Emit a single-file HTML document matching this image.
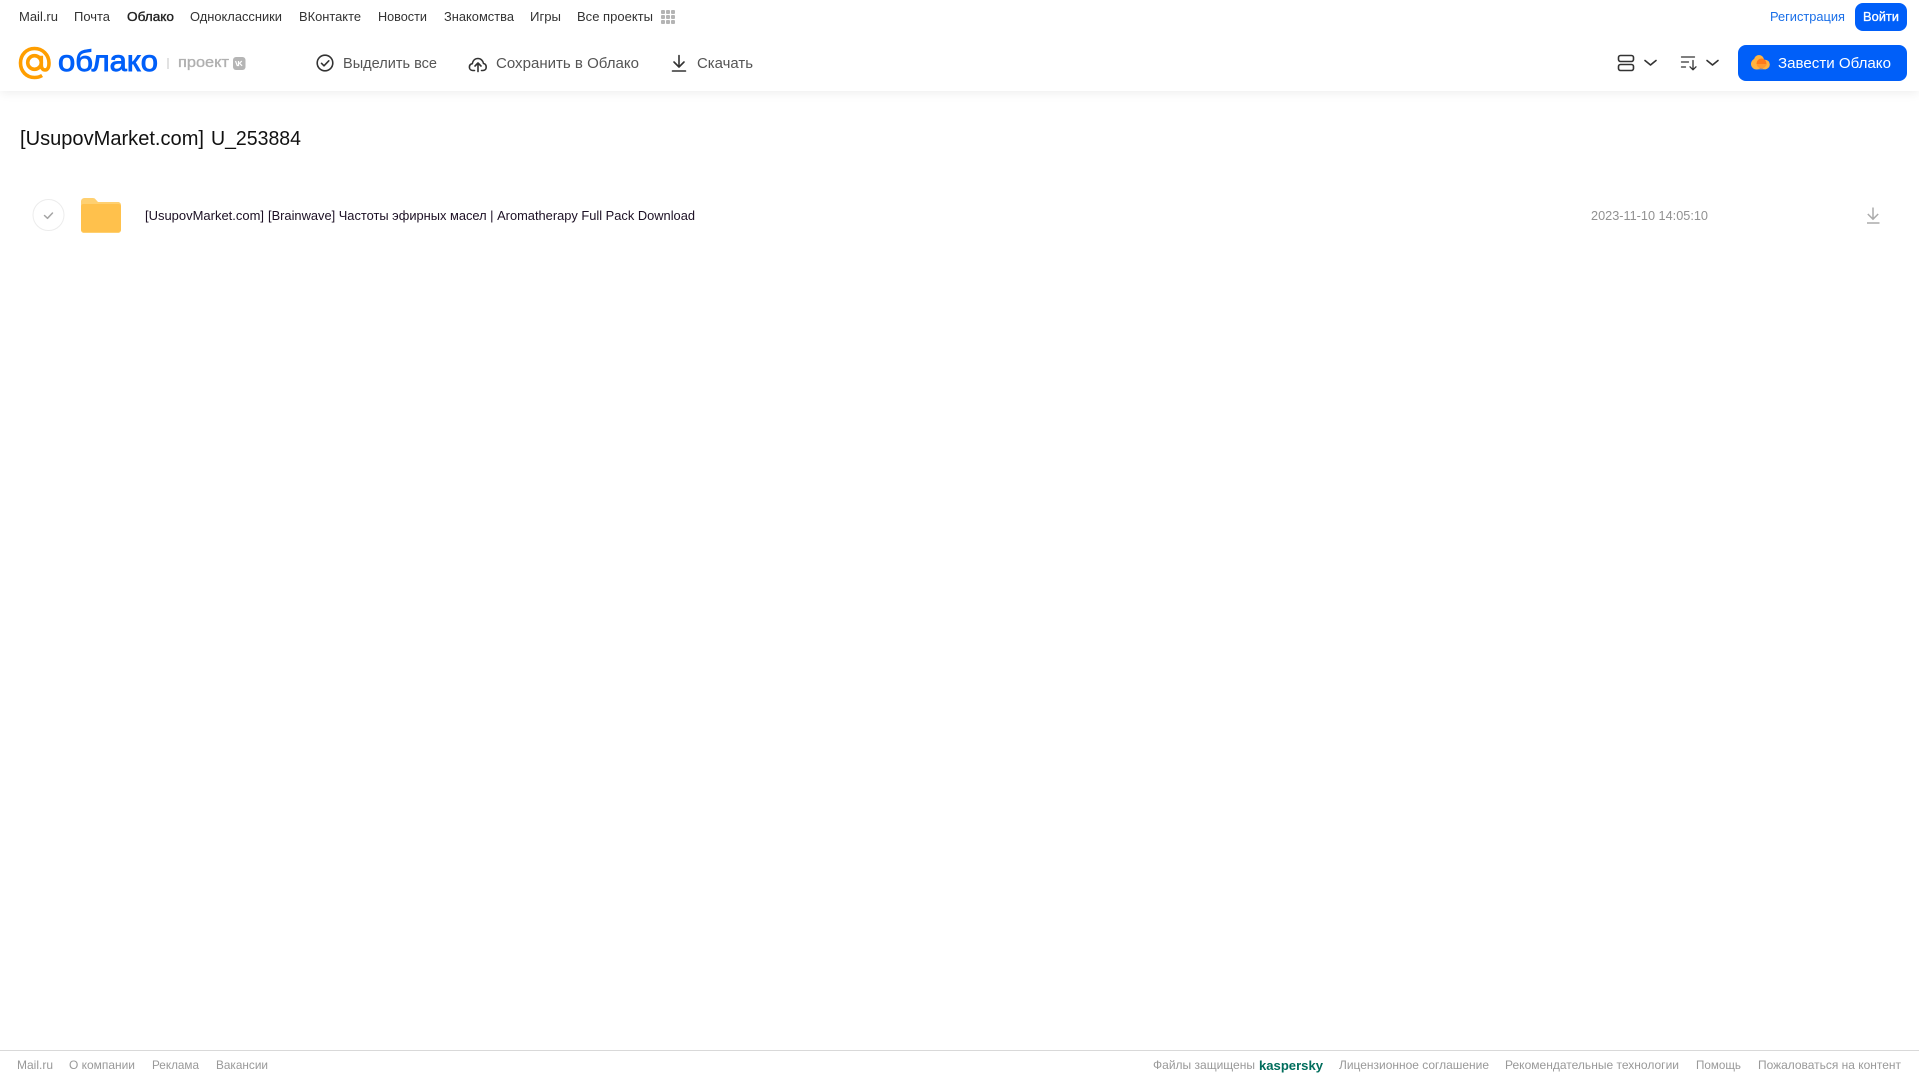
<!DOCTYPE html>
<html lang="ru">
<head>
<meta charset="utf-8">
<title>Облако</title>
<style>
html,body{margin:0;padding:0;background:#fff;width:1919px;height:1079px;overflow:hidden}
.hd{position:absolute;left:0;top:0;width:1919px;height:91px;background:#fff;box-shadow:0 2px 10px rgba(0,0,0,.07)}
svg{position:absolute;left:0;top:0}
text{font-family:"Liberation Sans",Arial,sans-serif}
</style>
</head>
<body>
<div class="hd"></div>
<svg width="1919" height="1079" viewBox="0 0 1919 1079" xmlns="http://www.w3.org/2000/svg">
<!-- top nav -->
<g font-size="12.5" fill="#333">
<text x="19" y="21" textLength="39" lengthAdjust="spacingAndGlyphs">Mail.ru</text>
<text x="74" y="21" textLength="36" lengthAdjust="spacingAndGlyphs">Почта</text>
<text x="127" y="21" fill="#222" stroke="#222" stroke-width=".35" textLength="47" lengthAdjust="spacingAndGlyphs">Облако</text>
<text x="190" y="21" textLength="92" lengthAdjust="spacingAndGlyphs">Одноклассники</text>
<text x="299" y="21" textLength="62" lengthAdjust="spacingAndGlyphs">ВКонтакте</text>
<text x="378" y="21" textLength="49" lengthAdjust="spacingAndGlyphs">Новости</text>
<text x="444" y="21" textLength="70" lengthAdjust="spacingAndGlyphs">Знакомства</text>
<text x="530" y="21" textLength="31" lengthAdjust="spacingAndGlyphs">Игры</text>
<text x="577" y="21" textLength="76" lengthAdjust="spacingAndGlyphs">Все проекты</text>
</g>
<g fill="#b4b4b4">
<rect x="661" y="10" width="4" height="4" rx="1"/><rect x="666" y="10" width="4" height="4" rx="1"/><rect x="671" y="10" width="4" height="4" rx="1"/>
<rect x="661" y="15" width="4" height="4" rx="1"/><rect x="666" y="15" width="4" height="4" rx="1"/><rect x="671" y="15" width="4" height="4" rx="1"/>
<rect x="661" y="20" width="4" height="4" rx="1"/><rect x="666" y="20" width="4" height="4" rx="1"/><rect x="671" y="20" width="4" height="4" rx="1"/>
</g>
<text x="1770" y="21" font-size="12.5" fill="#1a6fe8" textLength="75" lengthAdjust="spacingAndGlyphs">Регистрация</text>
<rect x="1855" y="3" width="52" height="28" rx="8" fill="#005ff9"/>
<text x="1863" y="21" font-size="12.5" fill="#fff" stroke="#fff" stroke-width=".3" textLength="36" lengthAdjust="spacingAndGlyphs">Войти</text>

<!-- logo -->
<g fill="none" stroke="#ff9e00" stroke-width="3.6">
<circle cx="34.500" cy="62.500" r="6.800"/>
<path d="M41.300 55.700v9.300c0 3.300 1.700 5 3.800 5 2.500 0 3.900-2.600 3.900-7C49 54.800 42.500 48.500 34.500 48.500S20.500 54.800 20.500 63 26.500 77.500 34.500 77.500c3 0 5.400-.7 7.600-2"/>
</g>
<text x="58" y="71" font-size="29.500" fill="#005ff9" stroke="#005ff9" stroke-width=".9" textLength="100" lengthAdjust="spacingAndGlyphs">облако</text>
<rect x="167.500" y="58" width="1" height="11" fill="#c4c4c4"/>
<text x="178" y="67" font-size="15" fill="#b0b0b0" stroke="#b0b0b0" stroke-width=".35" textLength="51" lengthAdjust="spacingAndGlyphs">проект</text>
<rect x="233" y="57" width="12.500" height="13" rx="3" fill="#b5b5b5"/>
<path d="M235.500 61l1.700 4.500h1.300v-4.500M241.800 61l-2.300 2.300 2.600 2.500" fill="none" stroke="#fff" stroke-width="1.200"/>

<!-- toolbar -->
<g fill="none" stroke="#333" stroke-width="1.600" stroke-linecap="round" stroke-linejoin="round">
<circle cx="325" cy="63" r="7.800"/>
<path d="M321.500 63.300l2.500 2.500 4.800-5"/>
<path d="M474.500 70.500h-1.800c-2 0-3.300-1.500-3.300-3.400 0-1.800 1.200-3.100 2.900-3.400.6-3.200 2.800-5.200 5.600-5.200 2.900 0 5.100 2.100 5.600 5 1.700.3 2.700 1.800 2.700 3.600 0 2-1.400 3.400-3.400 3.400h-1.300"/>
<path d="M478 71.500v-8.500M475 66l3-3 3 3"/>
<path d="M679 55.500v11M674 62l5 5 5-5"/>
<path d="M672.500 71h13"/>
</g>
<g font-size="14.500" fill="#555">
<text x="343" y="68" textLength="94" lengthAdjust="spacingAndGlyphs">Выделить все</text>
<text x="496" y="68" textLength="143" lengthAdjust="spacingAndGlyphs">Сохранить в Облако</text>
<text x="697" y="68" textLength="56" lengthAdjust="spacingAndGlyphs">Скачать</text>
</g>

<!-- view / sort -->
<g fill="none" stroke="#333" stroke-width="1.600" stroke-linecap="round" stroke-linejoin="round">
<rect x="1618.500" y="55.500" width="15" height="6" rx="2"/>
<rect x="1618.500" y="64.500" width="15" height="6" rx="2"/>
<path d="M1645 60.500l5.500 4.500 5.500-4.500"/>
</g>
<g fill="none" stroke="#333" stroke-width="1.300" stroke-linecap="round" stroke-linejoin="round">
<path d="M1681.500 57h13M1681.500 62h7M1681.500 67h4"/>
<path d="M1693 60.500v9M1690 66.800l3 3 3-3"/>
</g>
<path d="M1707 60.500l5.500 4.500 5.500-4.500" fill="none" stroke="#333" stroke-width="1.600" stroke-linecap="round" stroke-linejoin="round"/>
<rect x="1738" y="45" width="169" height="36" rx="8" fill="#005ff9"/>
<g>
<circle cx="1756.500" cy="64" r="5.500" fill="#ffb340"/>
<circle cx="1759" cy="60" r="5" fill="#ffb340"/>
<circle cx="1765" cy="64.500" r="4.800" fill="#ffb340"/>
<circle cx="1761.500" cy="63.500" r="5" fill="#ff7a1a"/>
<rect x="1756" y="64" width="10" height="5.500" fill="#ffb340" opacity=".55"/>
</g>
<text x="1778" y="68" font-size="14.500" fill="#fff" textLength="113" lengthAdjust="spacingAndGlyphs">Завести Облако</text>

<!-- title -->
<text x="20" y="145" font-size="20.500" fill="#111" textLength="184" lengthAdjust="spacingAndGlyphs">[UsupovMarket.com]</text>
<text x="211" y="145" font-size="20.500" fill="#111" textLength="90" lengthAdjust="spacingAndGlyphs">U_253884</text>

<!-- row -->
<circle cx="48.500" cy="215" r="15.500" fill="#fff" stroke="#ececec" stroke-width="1"/>
<path d="M44.500 215.500l3 2.800 5-5.300" fill="none" stroke="#a5a5a5" stroke-width="1.500" stroke-linecap="round" stroke-linejoin="round"/>
<path d="M81 201.500c0-1.900 1.500-3.500 3.500-3.500h8.300c1.100 0 2 .4 2.700 1.200l2.500 2.800H118c1.700 0 3 1.300 3 3v25c0 1.700-1.300 3-3 3H84c-1.700 0-3-1.300-3-3z" fill="#ffd070"/>
<rect x="81" y="204" width="40" height="28" rx="2.500" fill="#ffc14c"/>
<text x="145" y="220" font-size="12.500" fill="#1c1024" textLength="119" lengthAdjust="spacingAndGlyphs">[UsupovMarket.com]</text>
<text x="268" y="220" font-size="12.500" fill="#1c1024" textLength="427" lengthAdjust="spacingAndGlyphs">[Brainwave] Частоты эфирных масел | Aromatherapy Full Pack Download</text>
<text x="1591" y="220" font-size="12.500" fill="#919191" textLength="117" lengthAdjust="spacingAndGlyphs">2023-11-10 14:05:10</text>
<g fill="none" stroke="#ababab" stroke-width="1.500">
<path d="M1873 207.500v11.500M1867.800 214l5.200 5.200 5.200-5.200"/>
<path d="M1867 223h12.500"/>
</g>

<!-- footer -->
<rect x="0" y="1050" width="1919" height="1" fill="#d9d9d9"/>
<g font-size="12" fill="#999">
<text x="17" y="1069" textLength="36" lengthAdjust="spacingAndGlyphs">Mail.ru</text>
<text x="69" y="1069" textLength="66" lengthAdjust="spacingAndGlyphs">О компании</text>
<text x="152" y="1069" textLength="47" lengthAdjust="spacingAndGlyphs">Реклама</text>
<text x="216" y="1069" textLength="52" lengthAdjust="spacingAndGlyphs">Вакансии</text>
<text x="1153" y="1069" textLength="102" lengthAdjust="spacingAndGlyphs">Файлы защищены</text>
<text x="1339" y="1069" textLength="150" lengthAdjust="spacingAndGlyphs">Лицензионное соглашение</text>
<text x="1505" y="1069" textLength="174" lengthAdjust="spacingAndGlyphs">Рекомендательные технологии</text>
<text x="1696" y="1069" textLength="45" lengthAdjust="spacingAndGlyphs">Помощь</text>
<text x="1758" y="1069" textLength="143" lengthAdjust="spacingAndGlyphs">Пожаловаться на контент</text>
</g>
<text x="1259" y="1070" font-size="13" font-weight="700" fill="#006d5c" textLength="64" lengthAdjust="spacingAndGlyphs">kaspersky</text>
</svg>
</body>
</html>
